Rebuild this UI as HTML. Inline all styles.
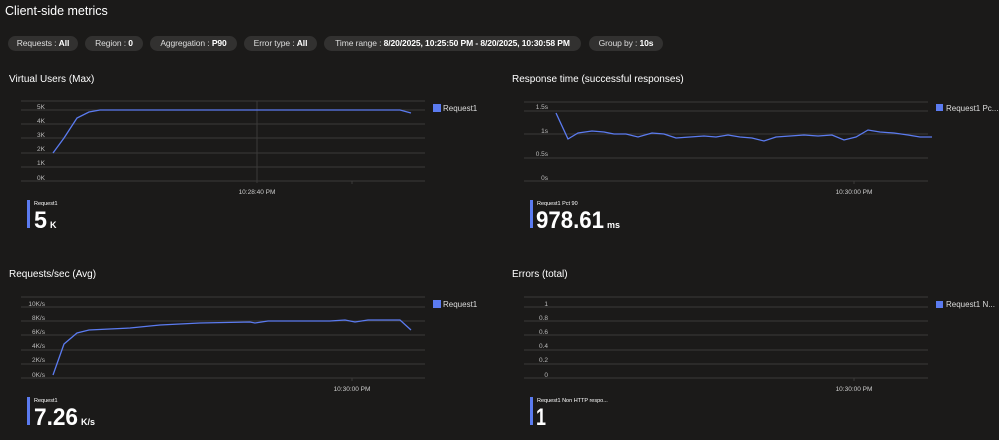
<!DOCTYPE html>
<html><head><meta charset="utf-8"><style>
body{margin:0;background:#1b1a19;width:999px;height:440px;overflow:hidden;font-family:"Liberation Sans",sans-serif;color:#fff}
.p{position:absolute;top:36px;height:15px;border-radius:8px;background:#323130;font-size:8.5px;line-height:15px;text-align:center;color:#ddd;white-space:nowrap;letter-spacing:-0.1px}
.p b{color:#fff}
</style></head><body>
<div style="position:absolute;left:5px;top:4px;font-size:12.5px;">Client-side metrics</div>
<div class="p" style="left:8px;width:70px">Requests : <b>All</b></div>
<div class="p" style="left:85px;width:58px">Region : <b>0</b></div>
<div class="p" style="left:150px;width:87px">Aggregation : <b>P90</b></div>
<div class="p" style="left:244px;width:73px">Error type : <b>All</b></div>
<div class="p" style="left:324px;width:257px">Time range : <b>8/20/2025, 10:25:50 PM - 8/20/2025, 10:30:58 PM</b></div>
<div class="p" style="left:589px;width:74px">Group by : <b>10s</b></div>
<svg width="999" height="440" style="position:absolute;left:0;top:0" font-family="Liberation Sans, sans-serif">
<g fill="#fff" font-size="10">
<text x="9" y="82">Virtual Users (Max)</text>
<text x="512" y="82">Response time (successful responses)</text>
<text x="9" y="277">Requests/sec (Avg)</text>
<text x="512" y="277">Errors (total)</text>
</g>
<g stroke="#3b3a39" stroke-width="1">
<path d="M21 101H425M21 110H425M21 124H425M21 138H425M21 153H425M21 167H425M21 181H425"/>
<path d="M257 101V183M352 181V184"/>
<path d="M524 102H928M524 111H928M524 134H928M524 158H928M524 181H928M854 181V184"/>
<path d="M21 297H425M21 307H425M21 321H425M21 335H425M21 350H425M21 364H425M21 378H425M352 378V381"/>
<path d="M524 297H928M524 307H928M524 321H928M524 335H928M524 350H928M524 364H928M524 378H928M854 378V381"/>
</g>
<g fill="#bbb" font-size="6.5" text-anchor="end">
<text x="45" y="109">5K</text><text x="45" y="123">4K</text><text x="45" y="137">3K</text><text x="45" y="151">2K</text><text x="45" y="165">1K</text><text x="45" y="180">0K</text>
<text x="548" y="109">1.5s</text><text x="548" y="133">1s</text><text x="548" y="156">0.5s</text><text x="548" y="180">0s</text>
<text x="45" y="306">10K/s</text><text x="45" y="320">8K/s</text><text x="45" y="334">6K/s</text><text x="45" y="348">4K/s</text><text x="45" y="362">2K/s</text><text x="45" y="377">0K/s</text>
<text x="548" y="306">1</text><text x="548" y="320">0.8</text><text x="548" y="334">0.6</text><text x="548" y="348">0.4</text><text x="548" y="362">0.2</text><text x="548" y="377">0</text>
</g>
<g fill="#ccc" font-size="6.5" text-anchor="middle">
<text x="257" y="194">10:28:40 PM</text><text x="854" y="194">10:30:00 PM</text>
<text x="352" y="391">10:30:00 PM</text><text x="854" y="391">10:30:00 PM</text>
</g>
<g fill="none" stroke="#5b7bf0" stroke-width="1.3">
<path d="M53 153L64 138L77 118L89 112L100 110L400 110L411 113"/>
<path d="M556 113L568 139L578 133L592 131L604 132L614 134L626 134L638 137L652 133L664 134L676 138L690 137L704 136L716 137L728 135L740 137L752 138L764 141L776 137L790 136L804 135L818 136L832 135L844 140L856 137L868 130L880 132L894 133L908 135L920 137L932 137"/>
<path d="M53 375L64 344L77 333L89 330L130 328L160 325L200 323L250 322L255 323L268 321L330 321L345 320L355 322L368 320L400 320L411 330"/>
</g>
<g fill="#5b7bf0">
<rect x="433" y="104" width="8" height="8"/><rect x="936" y="104" width="7" height="7"/>
<rect x="433" y="300" width="8" height="8"/><rect x="936" y="301" width="7" height="7"/>
<rect x="27" y="200" width="3" height="28"/><rect x="530" y="200" width="3" height="28"/>
<rect x="27" y="397" width="3" height="28"/><rect x="530" y="397" width="3" height="28"/>
</g>
<g fill="#ddd" font-size="8">
<text x="443" y="111">Request1</text><text x="946" y="111">Request1 Pc...</text>
<text x="443" y="307">Request1</text><text x="946" y="307">Request1 N...</text>
</g>
<g fill="#fff" font-size="5.5">
<text x="34" y="205">Request1</text><text x="537" y="205">Request1 Pct 90</text>
<text x="34" y="402">Request1</text><text x="537" y="402">Request1 Non HTTP respo...</text>
</g>
<g fill="#fff" font-weight="bold">
<text x="34" y="228" font-size="24" textLength="13" lengthAdjust="spacingAndGlyphs">5</text><text x="50" y="228" font-size="9">K</text>
<text x="536" y="228" font-size="24" textLength="68" lengthAdjust="spacingAndGlyphs">978.61</text><text x="607" y="228" font-size="9">ms</text>
<text x="34" y="425" font-size="24" textLength="44" lengthAdjust="spacingAndGlyphs">7.26</text><text x="81" y="425" font-size="9">K/s</text>
<text x="536" y="425" font-size="24" textLength="10" lengthAdjust="spacingAndGlyphs">1</text>
</g>
</svg>
</body></html>
